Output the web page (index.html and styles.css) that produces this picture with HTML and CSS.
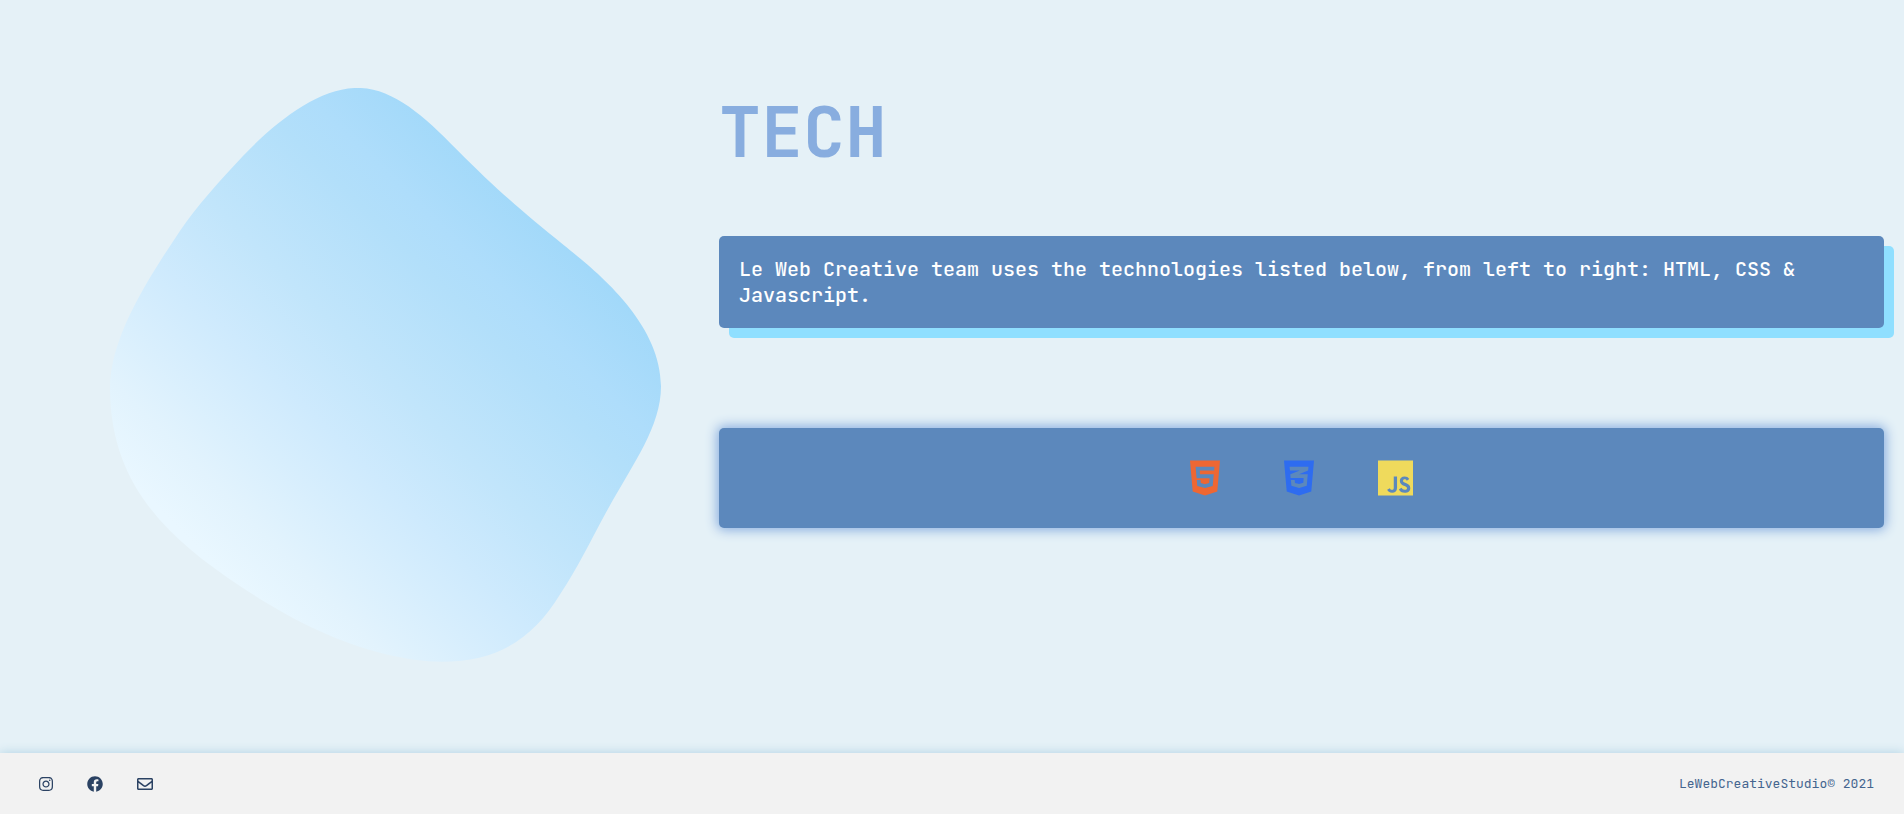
FILE: index.html
```html
<!DOCTYPE html>
<html lang="en">
<head>
  <meta charset="utf-8">
  <meta name="viewport" content="width=device-width, initial-scale=1">
  <title>Tech</title>
  <link rel="stylesheet" href="styles.css">
</head>
<body>
  <main class="tech">
    <div class="blob">
      <svg class="blob-shape" viewBox="52 48 1442 1502" aria-hidden="true">
        <defs>
          <linearGradient id="blob-fill" gradientUnits="userSpaceOnUse" x1="52" y1="1524" x2="1494" y2="47">
            <stop offset="0.18" stop-color="#e9f7ff"/>
            <stop offset="0.25" stop-color="#e2f3fd"/>
            <stop offset="0.4" stop-color="#ceeafd"/>
            <stop offset="0.5" stop-color="#c1e5fb"/>
            <stop offset="0.63" stop-color="#b2dffa"/>
            <stop offset="0.68" stop-color="#aeddfb"/>
            <stop offset="0.79" stop-color="#a0d8f9"/>
          </linearGradient>
        </defs>
        <path transform="scale(1 1.0168)" fill="url(#blob-fill)" d="M700 47C790 47 870 115 960 206C1060 305 1130 365 1240 452C1310 508 1494 645 1494 815C1494 920 1420 1015 1350 1140C1310 1212 1275 1285 1230 1350C1160 1462 1070 1524 920 1524C830 1524 710 1495 600 1445C530 1413 455 1370 390 1328C220 1215 52 1080 52 820C52 690 150 540 235 415C280 350 340 285 400 222C490 130 600 47 700 47Z"/>
      </svg>
    </div>
    <section class="content">
      <h1 class="title">TECH</h1>
      <p class="intro">Le Web Creative team uses the technologies listed below, from left to right: HTML, CSS &amp; Javascript.</p>
      <div class="stack">
        <svg class="logo logo-html" viewBox="0 0 384 512" role="img" aria-label="HTML5"><path d="M0 32l34.9 395.8L191.5 480l157.6-52.2L384 32H0zm308.2 127.9H124.4l4.1 49.4h175.6l-13.6 148.4-97.9 27v.3h-1.1l-98.7-27.3-6-75.8h47.7L138 320l53.5 14.5 53.7-14.5 6-62.2H84.3L71.5 112.2h241.1l-4.4 47.7z"/></svg>
        <svg class="logo logo-css" viewBox="0 0 384 512" role="img" aria-label="CSS3"><path d="M0 32l34.9 395.8L192 480l157.1-52.2L384 32H0zm313.1 80l-4.8 47.3L193 208.6l-.3.1h111.5l-12.8 146.6-98.2 28.7-98.8-29.2-6.4-73.9h48.9l3.2 38.3 52.6 13.3 54.7-15.4 3.7-61.6-166.3-.5v-.1l-.2.1-3.6-46.3L193.1 162l6.5-2.7H76.7L70.9 112h242.2z"/></svg>
        <svg class="logo logo-js" viewBox="0 0 448 512" role="img" aria-label="JavaScript"><path d="M0 32v448h448V32H0zm243.8 349.4c0 43.6-25.6 63.5-62.9 63.5-33.7 0-53.2-17.4-63.2-38.5l34.3-20.7c6.6 11.7 12.6 21.6 27.1 21.6 13.8 0 22.6-5.4 22.6-26.5V237.7h42.1v143.7zm99.6 63.5c-39.1 0-64.4-18.6-76.7-43l34.3-19.8c9 14.7 20.8 25.6 41.5 25.6 17.4 0 28.6-8.7 28.6-20.8 0-14.4-11.4-19.5-30.7-28l-10.5-4.5c-30.4-12.9-50.5-29.2-50.5-63.5 0-31.6 24.1-55.6 61.6-55.6 26.8 0 46 9.3 59.8 33.7L368 290c-7.2-12.9-15-18-27.1-18-12.3 0-20.1 7.8-20.1 18 0 12.6 7.8 17.7 25.9 25.6l10.5 4.5c35.8 15.3 55.9 31 55.9 66.2 0 37.8-29.8 58.6-69.7 58.6z"/></svg>
      </div>
    </section>
  </main>
  <footer class="footer">
    <nav class="social" aria-label="Social">
      <a class="social-link" href="#instagram" aria-label="Instagram"><svg class="social-icon" viewBox="0 0 448 512"><path d="M224.1 141c-63.6 0-114.9 51.3-114.9 114.9s51.3 114.9 114.9 114.9S339 319.5 339 255.9 287.7 141 224.1 141zm0 189.6c-41.1 0-74.7-33.5-74.7-74.7s33.5-74.7 74.7-74.7 74.7 33.5 74.7 74.7-33.6 74.7-74.7 74.7zm146.4-194.3c0 14.9-12 26.8-26.8 26.8-14.9 0-26.8-12-26.8-26.8s12-26.8 26.8-26.8 26.8 12 26.8 26.8zm76.1 27.2c-1.7-35.9-9.9-67.7-36.2-93.9-26.2-26.2-58-34.4-93.9-36.2-37-2.1-147.9-2.1-184.9 0-35.8 1.7-67.6 9.9-93.9 36.1s-34.4 58-36.2 93.9c-2.1 37-2.1 147.9 0 184.9 1.7 35.9 9.9 67.7 36.2 93.9s58 34.4 93.9 36.2c37 2.1 147.9 2.1 184.9 0 35.9-1.7 67.7-9.9 93.9-36.2 26.2-26.2 34.4-58 36.2-93.9 2.1-37 2.1-147.8 0-184.8zM398.8 388c-7.8 19.6-22.9 34.7-42.6 42.6-29.5 11.7-99.5 9-132.1 9s-102.7 2.6-132.1-9c-19.6-7.8-34.7-22.9-42.6-42.6-11.7-29.5-9-99.5-9-132.1s-2.6-102.7 9-132.1c7.8-19.6 22.9-34.7 42.6-42.6 29.5-11.7 99.5-9 132.1-9s102.7-2.6 132.1 9c19.6 7.8 34.7 22.9 42.6 42.6 11.7 29.5 9 99.5 9 132.1s2.7 102.7-9 132.1z"/></svg></a>
      <a class="social-link" href="#facebook" aria-label="Facebook"><svg class="social-icon" viewBox="0 0 512 512"><path d="M504 256C504 119 393 8 256 8S8 119 8 256c0 123.78 90.69 226.38 209.25 245V327.69h-63V256h63v-54.64c0-62.15 37-96.48 93.67-96.48 27.14 0 55.52 4.84 55.52 4.84v61h-31.28c-30.8 0-40.41 19.12-40.41 38.73V256h68.78l-11 71.69h-57.78V501C413.31 482.38 504 379.78 504 256z"/></svg></a>
      <a class="social-link" href="#email" aria-label="Email"><svg class="social-icon" viewBox="0 0 512 512"><path d="M464 64H48C21.49 64 0 85.49 0 112v288c0 26.51 21.49 48 48 48h416c26.51 0 48-21.49 48-48V112c0-26.51-21.49-48-48-48zm0 48v40.805c-22.422 18.259-58.168 46.651-134.587 106.49-16.841 13.247-50.201 45.072-73.413 44.701-23.208.375-56.579-31.459-73.413-44.701C106.18 199.465 70.425 171.067 48 152.805V112h416zM48 400V214.398c22.914 18.251 55.409 43.862 104.938 82.646 21.857 17.205 60.134 55.186 103.062 54.955 42.717.231 80.509-37.199 103.053-54.947 49.528-38.783 82.032-64.401 104.947-82.653V400H48z"/></svg></a>
    </nav>
    <span class="copyright">LeWebCreativeStudio© 2021</span>
  </footer>
</body>
</html>
```
FILE: styles.css
```css
* {
  box-sizing: border-box;
}

body {
  margin: 0;
  min-height: 100vh;
  display: flex;
  flex-direction: column;
  background: #e5f1f7;
  font-family: "JetBrains Mono", "DejaVu Sans Mono", monospace;
}

.tech {
  flex: 1;
  display: grid;
  grid-template-columns: 719fr 1165fr;
  align-items: start;
  padding: 88px 20px 88px 0;
}

.blob {
  padding: 0 58px 0 110px;
}

.blob-shape {
  display: block;
  width: 100%;
  height: auto;
}

.title {
  margin: 0 0 60px;
  color: #88addf;
  font-size: 70px;
  font-weight: 700;
  line-height: 88px;
}

.intro {
  margin: 0 0 100px;
  padding: 20px;
  border-radius: 5px;
  background: #5c88bc;
  box-shadow: 10px 10px 0 #8fdfff;
  color: #fff;
  font-size: 20px;
  font-weight: 500;
  line-height: 26px;
}

.stack {
  display: flex;
  justify-content: center;
  gap: 64px;
  padding: 30px;
  border-radius: 5px;
  background: #5c88bc;
  box-shadow: 0 0 12px 2px #88addf;
}

.logo {
  height: 40px;
  width: auto;
  fill: currentColor;
}

.logo-html {
  color: #ee6733;
}

.logo-css {
  color: #2e6cf0;
}

.logo-js {
  color: #efda5c;
}

.footer {
  display: flex;
  align-items: center;
  justify-content: space-between;
  padding: 22px 30px 22px 39px;
  background: #f2f2f2;
  box-shadow: 0 0 10px #b0d2e2;
  color: #44658f;
}

.social {
  display: flex;
  gap: 34px;
}

.social-link {
  display: flex;
  color: #2b4263;
}

.social-icon {
  height: 16px;
  width: auto;
  fill: currentColor;
}

.copyright {
  font-size: 13px;
  line-height: 17px;
}
```
